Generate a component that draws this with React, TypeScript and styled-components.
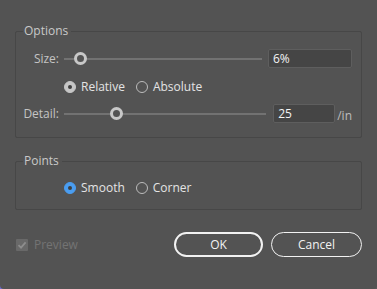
import * as React from 'react'
import styled, { createGlobalStyle } from 'styled-components'

const GlobalStyle = createGlobalStyle`
  html, body {
    margin: 0;
    padding: 0;
    background: linear-gradient(to right, #6d6dd2 0%, #5b5b5b 40%);
  }
  body {
    font-family: "Open Sans", "Noto Sans", sans-serif;
    font-size: 12px;
  }
`

const Dialog = styled.div`
  width: 377px;
  height: 289px;
  box-sizing: border-box;
  padding: 23px 15px 0;
  background: #535353;
  border-radius: 0 0 4px 4px;
  display: flex;
  flex-direction: column;
`

const Group = styled.fieldset<{ $bottom: number }>`
  margin: 0;
  padding: 0 9px ${p => p.$bottom}px 0;
  border: 1px solid #474747;
  border-radius: 2px;
  min-width: 0;
  & + & {
    margin-top: 15px;
  }
`

const Legend = styled.legend`
  margin-left: 7px;
  padding: 0 3px 0 1px;
  line-height: 16px;
  color: #c9c9c9;
`

const Row = styled.div<{ $top: number; $height: number }>`
  display: flex;
  align-items: center;
  height: ${p => p.$height}px;
  margin-top: ${p => p.$top}px;
`

const Label = styled.span`
  width: 43px;
  margin-right: 5px;
  text-align: right;
  color: #c4c4c4;
  white-space: nowrap;
`

const Slider = styled.div<{ $gap: number }>`
  flex: 1;
  position: relative;
  height: 13px;
  margin-right: ${p => p.$gap}px;
  &::before {
    content: '';
    position: absolute;
    left: 0;
    right: 0;
    top: 6px;
    height: 2px;
    background: #727272;
  }
`

const Thumb = styled.span`
  position: absolute;
  top: 0;
  width: 13px;
  height: 13px;
  box-sizing: border-box;
  border: 3px solid #c8c8c8;
  border-radius: 50%;
  background: #535353;
`

const Field = styled.div<{ $width: number }>`
  width: ${p => p.$width}px;
  height: 19px;
  box-sizing: border-box;
  padding: 0 4px;
  background: #454545;
  border: 1px solid #5e5e5e;
  border-radius: 2px;
  color: #f4f4f4;
  line-height: 17px;
`

const Unit = styled.span`
  margin-left: 2px;
  color: #bdbdbd;
  align-self: flex-end;
  line-height: 14px;
`

const Choices = styled.div`
  display: flex;
  align-items: center;
  padding-left: 48px;
`

const Choice = styled.label`
  display: flex;
  align-items: center;
  gap: 5px;
  margin-right: 11px;
  color: #e4e4e4;
`

const Radio = styled.span<{ $on?: boolean; $accent?: string }>`
  position: relative;
  width: 12px;
  height: 12px;
  box-sizing: border-box;
  border-radius: 50%;
  border: 1px solid ${p => (p.$on ? p.$accent : '#bcbcbc')};
  background: ${p => (p.$on ? p.$accent : 'transparent')};
  &::after {
    content: '';
    display: ${p => (p.$on ? 'block' : 'none')};
    position: absolute;
    left: 3px;
    top: 3px;
    width: 4px;
    height: 4px;
    border-radius: 50%;
    background: #3f3f3f;
  }
`

const Footer = styled.div`
  display: flex;
  align-items: center;
  margin-top: 22px;
  padding-left: 1px;
  height: 25px;
`

const Check = styled.span`
  width: 12px;
  height: 12px;
  border-radius: 1px;
  background: #696969;
  display: flex;
  align-items: center;
  justify-content: center;
`

const CheckLabel = styled.span`
  margin-left: 6px;
  color: #737373;
  flex: 1;
`

const Button = styled.button<{ $primary?: boolean; $width: number }>`
  width: ${p => p.$width}px;
  height: 25px;
  margin-left: 8px;
  padding: 0;
  box-sizing: border-box;
  border: ${p => (p.$primary ? '2px' : '1.5px')} solid #f2f2f2;
  border-radius: 13px;
  background: transparent;
  color: #f2f2f2;
  font: inherit;
`

const Slide = ({ pos, gap }: { pos: number; gap: number }) => (
  <Slider $gap={gap}>
    <Thumb style={{ left: pos }} />
  </Slider>
)

const App = () => (
  <>
    <GlobalStyle />
    <Dialog>
      <Group $bottom={14}>
        <Legend>Options</Legend>
        <Row $top={10} $height={19}>
          <Label>Size:</Label>
          <Slide pos={10} gap={6} />
          <Field $width={84}>6%</Field>
        </Row>
        <Row $top={10} $height={17}>
          <Choices>
            <Choice>
              <Radio $on $accent="#c6c6c6" />
              Relative
            </Choice>
            <Choice>
              <Radio />
              Absolute
            </Choice>
          </Choices>
        </Row>
        <Row $top={9} $height={19}>
          <Label>Detail:</Label>
          <Slide pos={46} gap={7} />
          <Field $width={62}>25</Field>
          <Unit>/in</Unit>
        </Row>
      </Group>
      <Group $bottom={13}>
        <Legend>Points</Legend>
        <Row $top={10} $height={17}>
          <Choices>
            <Choice>
              <Radio $on $accent="#4a9df0" />
              Smooth
            </Choice>
            <Choice>
              <Radio />
              Corner
            </Choice>
          </Choices>
        </Row>
      </Group>
      <Footer>
        <Check>
          <svg width="10" height="10" viewBox="0 0 10 10">
            <path d="M1.5 5.2 L4 7.6 L8.6 2.4" fill="none" stroke="#8d8d8d" strokeWidth="1.8" />
          </svg>
        </Check>
        <CheckLabel>Preview</CheckLabel>
        <Button $primary $width={89}>OK</Button>
        <Button $width={91}>Cancel</Button>
      </Footer>
    </Dialog>
  </>
)

export default App
